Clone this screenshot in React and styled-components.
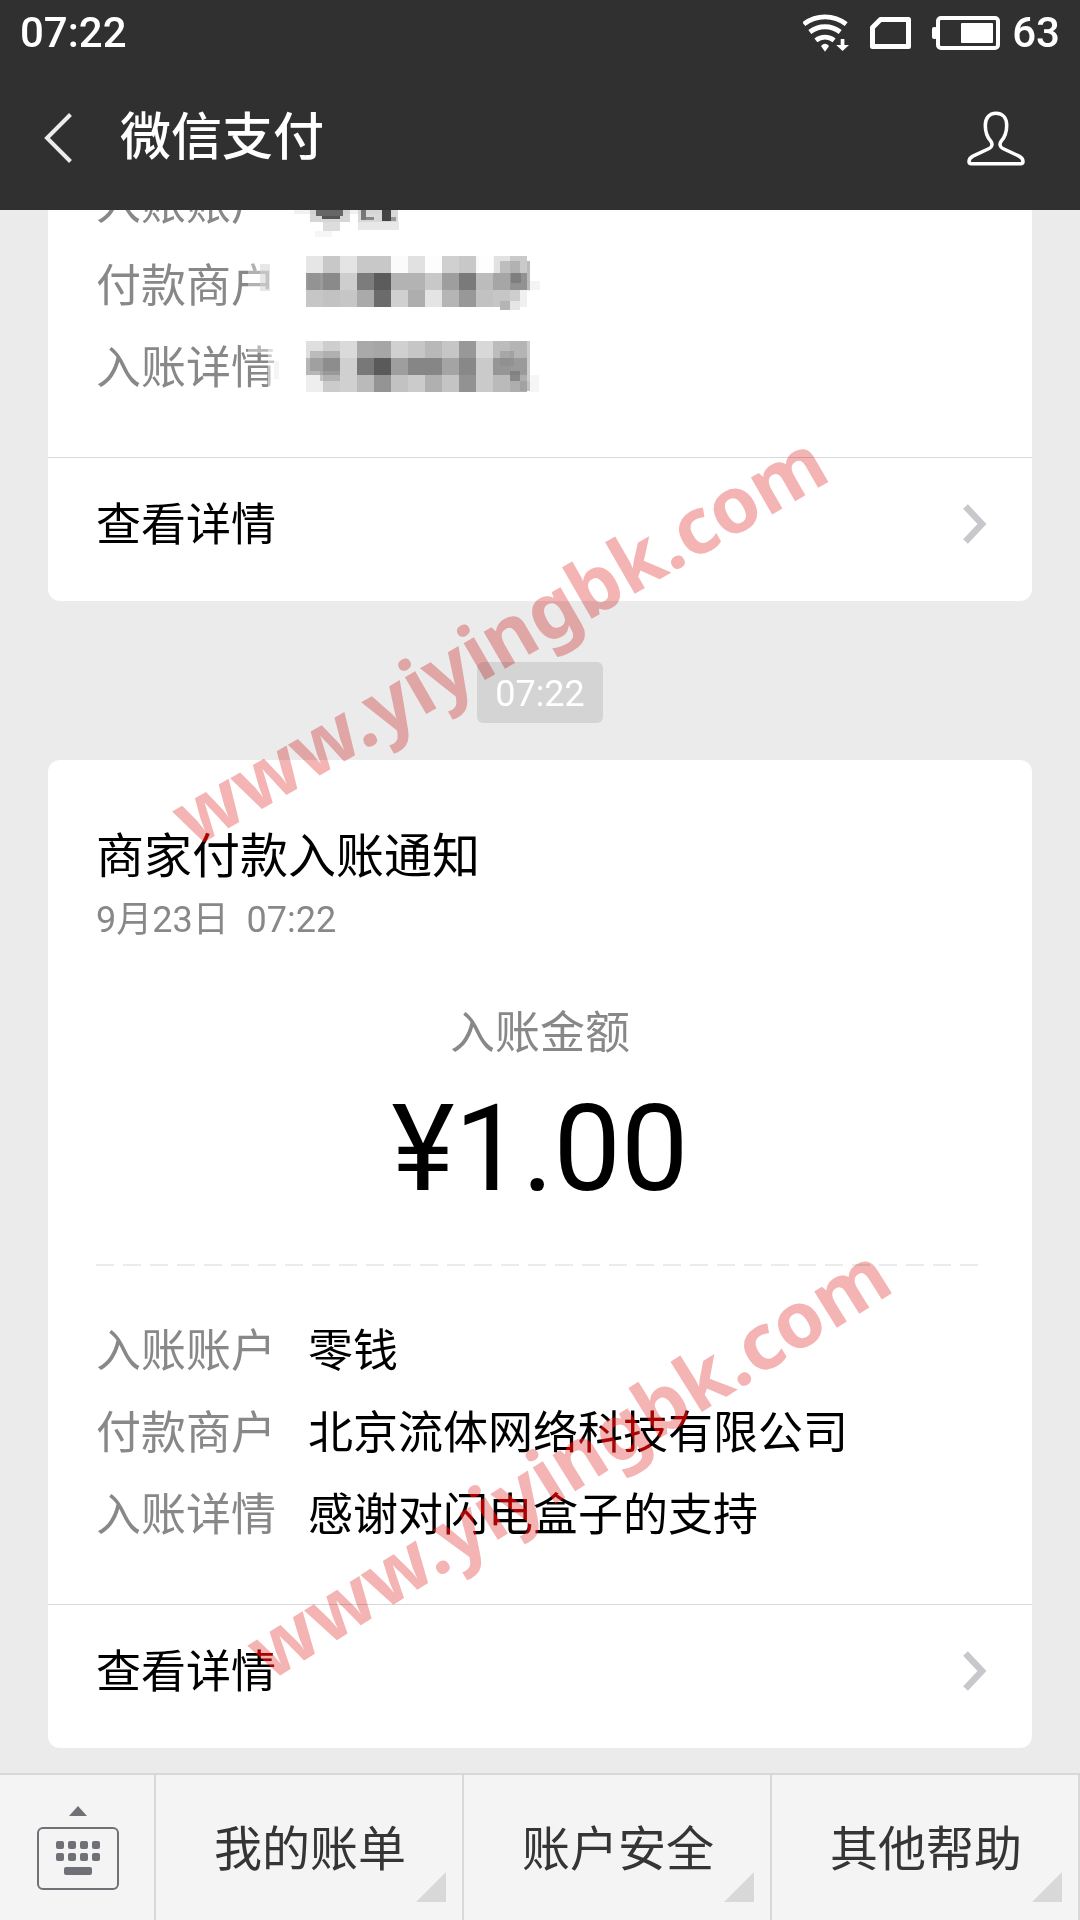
import React from "react";
import styled, { createGlobalStyle } from "styled-components";

const GlobalStyle = createGlobalStyle`
  *, *::before, *::after { box-sizing: border-box; }
  html, body { margin: 0; padding: 0; }
  body {
    background: #ebebeb;
    font-family: Roboto, "Noto Sans CJK SC", sans-serif;
    color: #000;
  }
  h1, h2, p, dl, dt, dd { margin: 0; font-weight: 400; }
  button { font: inherit; color: inherit; border: 0; padding: 0; background: none; cursor: pointer; }
  svg { display: block; flex: none; }
`;

const Screen = styled.div`
  position: relative;
  display: flex;
  flex-direction: column;
  height: 100vh;
  overflow: hidden;
`;

const Header = styled.header`
  flex: none;
  background: #303030;
  color: #fff;
`;

const StatusBar = styled.div`
  display: flex;
  align-items: center;
  justify-content: space-between;
  height: 68px;
  padding: 0 20px 2px;
  font-size: 42px;
  font-weight: 500;
  line-height: 48px;
`;

const StatusIcons = styled.div`
  display: flex;
  align-items: center;
  gap: ${(p) => p.$gap}px;
`;

const NavBar = styled.div`
  display: flex;
  align-items: center;
  height: 142px;
  padding: 0 55px 2px 44px;
  gap: 48px;
`;

const Title = styled.h1`
  flex: 1;
  font-size: 51px;
  font-weight: 500;
  line-height: 72px;
`;

const Chat = styled.main`
  flex: 1;
  min-height: 0;
  overflow: hidden;
  display: flex;
  flex-direction: column;
  justify-content: flex-end;
  padding: 0 48px 25px;
`;

const Card = styled.article`
  flex: none;
  background: #fff;
  border-radius: 12px;
`;

const CardBody = styled.div`
  padding: ${(p) => (p.$partial ? 0 : 67)}px 48px 47px;
`;

const CardTitle = styled.h2`
  font-size: 48px;
  line-height: 60px;
`;

const CardDate = styled.p`
  margin-top: 11px;
  font-size: 36px;
  line-height: 44px;
  color: #888;
  white-space: pre;
`;

const AmountBlock = styled.div`
  margin-top: 62px;
  text-align: center;
`;

const AmountLabel = styled.p`
  font-size: 45px;
  line-height: 60px;
  color: #888;
`;

const Amount = styled.p`
  margin-top: 15px;
  font-size: 120px;
  line-height: 140px;
`;

const Dashes = styled.div`
  height: 2px;
  margin: 45px 0;
  background: repeating-linear-gradient(to right, #ebebeb 0 18px, transparent 18px 27px);
`;

const Details = styled.dl`
  display: grid;
  grid-template-columns: 180px 1fr;
  column-gap: 32px;
  grid-auto-rows: 82px;
  align-items: center;
  font-size: 45px;
  line-height: 82px;
`;

const Label = styled.dt`
  color: #888;
  white-space: nowrap;
`;

const Value = styled.dd`
  white-space: nowrap;
`;

const DetailLink = styled.a`
  display: flex;
  align-items: center;
  justify-content: space-between;
  height: 144px;
  padding: 0 45px 8px 48px;
  border-top: 1px solid #d9d9d9;
  font-size: 45px;
  line-height: 60px;
  color: #000;
  text-decoration: none;

  svg { margin-bottom: 4px; }
`;

const TimePill = styled.time`
  flex: none;
  align-self: center;
  margin: 61px 0 37px;
  padding: 4px 18px 0;
  border-radius: 6px;
  background: #d4d4d4;
  color: #fff;
  font-size: 36px;
  line-height: 57px;
`;

const MenuBar = styled.nav`
  flex: none;
  display: flex;
  height: 147px;
  border-top: 2px solid #d8d8d8;
  background: #f4f4f4;
  color: #353535;
`;

const KeyboardButton = styled.button`
  flex: none;
  display: flex;
  align-items: center;
  justify-content: center;
  width: 156px;
  padding-left: 2px;
  border-right: 2px solid #d8d8d8;
`;

const MenuButton = styled.button`
  position: relative;
  flex: 1;
  padding: 4px 0 0 2px;
  font-size: 48px;
  line-height: 60px;
  border-right: 2px solid #d8d8d8;

  &::after {
    content: "";
    position: absolute;
    right: 16px;
    bottom: 18px;
    width: 30px;
    height: 30px;
    background: #d8d8d8;
    clip-path: polygon(100% 0, 100% 100%, 0 100%);
  }
`;

/* Two passes: multiply tints light areas, lighten turns dark strokes red. */
const Stamp = styled.div`
  &::after { content: attr(data-text); color: #b00000; mix-blend-mode: lighten; }
  & > span { color: #f4b4b4; mix-blend-mode: multiply; }
  &::after, & > span {
    position: absolute;
    left: ${(p) => p.$x}px;
    top: ${(p) => p.$y}px;
    transform: translate(-50%, -50%) rotate(${(p) => p.$angle}deg);
    font-family: "Noto Sans", sans-serif;
    font-size: 78px;
    font-weight: 700;
    line-height: 100px;
    white-space: nowrap;
    pointer-events: none;
  }
`;

function Watermark({ text, x, y, angle }) {
  return (
    <Stamp data-text={text} $x={x} $y={y} $angle={angle}>
      <span>{text}</span>
    </Stamp>
  );
}

const WifiIcon = () => (
  <svg width="46" height="40" viewBox="802 13 46 40" fill="none" stroke="#fff" strokeWidth="4.8">
    <path d="M802.8 24.2A34.5 34.5 0 0 1 845.2 24.2" />
    <path d="M808.8 32A24.7 24.7 0 0 1 839.2 32" />
    <path d="M814.9 40.3A14.6 14.6 0 0 1 833.1 40.3" />
    <path d="M820 46Q824 41.5 828 46L824 51.8Z" fill="#fff" stroke="none" />
    <path d="M839.7 39H843.4V45H848L841.6 51L835.2 45H839.7Z" fill="#fff" stroke="none" />
  </svg>
);

const SimIcon = () => (
  <svg width="41" height="32" viewBox="0 0 41 32" fill="none" stroke="#fff" strokeWidth="5" strokeLinejoin="round">
    <path d="M10.5 2.5H38.5V29.5H2.5V10.5Z" />
  </svg>
);

const BatteryIcon = () => (
  <svg width="68" height="34" viewBox="0 0 68 34">
    <rect x="6" y="2" width="60" height="30" rx="3" fill="none" stroke="#fff" strokeWidth="4" />
    <rect x="0" y="11" width="5" height="12" rx="2" fill="#fff" />
    <rect x="29" y="7" width="32" height="20" rx="1" fill="#fff" />
  </svg>
);

const BackIcon = () => (
  <svg width="28" height="50" viewBox="0 0 28 50" fill="none" stroke="#ececec" strokeWidth="4">
    <path d="M26.5 1.5L3 25L26.5 48.5" />
  </svg>
);

const PersonIcon = () => (
  <svg width="58" height="55" viewBox="0 0 59 56" fill="none" stroke="#fff" strokeWidth="3.6" strokeLinejoin="round">
    <path d="M29.5 2.3C22 2.3 18.6 8 18.6 14.5C18.6 22 20.5 26.5 24 30.5C26.4 33.5 25.6 36.6 22.5 38.2L6 46C3 47.6 2 49 2 51.5Q2 53.8 4.5 53.8H54.5Q57 53.8 57 51.5C57 49 56 47.6 53 46L36.5 38.2C33.4 36.6 32.6 33.5 35 30.5C38.5 26.5 40.4 22 40.4 14.5C40.4 8 37 2.3 29.5 2.3Z" />
  </svg>
);

const ArrowIcon = () => (
  <svg width="24" height="40" viewBox="0 0 24 40" fill="none" stroke="#c7c7cc" strokeWidth="6.5">
    <path d="M2.5 2.5L19 20L2.5 37.5" />
  </svg>
);

const KeyboardIcon = () => (
  <svg width="82" height="84" viewBox="0 0 82 84" fill="#6f7176">
    <path d="M41 0L50 10H32Z" />
    <rect x="1" y="22" width="80" height="61" rx="5" fill="none" stroke="#6f7176" strokeWidth="2" />
    {[35, 47].map((y) =>
      [19, 31, 43, 55].map((x) => <rect key={`${x}-${y}`} x={x} y={y} width="8" height="8" rx="2" />)
    )}
    <rect x="27" y="61" width="28" height="8" rx="2" />
  </svg>
);

const CELL = 17;

/* Pixelated value: rows of grey levels, plus loose patches [x, y, w, h, colour, opacity]. */
function Mosaic({ top, rows, patches }) {
  return (
    <svg width="230" height="82" viewBox="0 2 230 82" overflow="visible" role="img" aria-label="已打码" shapeRendering="crispEdges">
      {rows.map((row, r) =>
        row.split(" ").map((level, c) => (
          <rect key={`${r}-${c}`} x={c * CELL - 2} y={top + r * CELL} width={CELL} height={CELL} fill={`#${level}${level}${level}`} />
        ))
      )}
      {patches.map(([x, y, w, h, fill, opacity], i) => (
        <rect key={i} x={x} y={y} width={w} height={h} fill={fill} opacity={opacity} />
      ))}
    </svg>
  );
}

const masked = [
  {
    label: "入账账户",
    top: 0,
    rows: [],
    patches: [
      [-14, 48, 100, 4, "#e4e4e4", 0.5],
      [2, 48, 40, 12, "#c4c4c4", 0.7],
      [8, 48, 27, 6, "#666", 1],
      [14, 54, 18, 3, "#555", 1],
      [15, 60, 17, 9, "#ddd", 1],
      [50, 48, 40, 12, "#cfcfcf", 0.8],
      [53, 48, 5, 10, "#777", 1],
      [58, 55, 8, 3, "#888", 1],
      [74, 48, 9, 11, "#444", 1],
      [83, 55, 5, 4, "#999", 1],
      [50, 60, 41, 8, "#e8e8e8", 1],
      [7, 69, 17, 6, "#f6f6f6", 1],
    ],
  },
  {
    label: "付款商户",
    top: 12,
    rows: [
      "e6 c8 e4 c8 c8 fb e1 fd d0 c8 fa e2 ca",
      "9a 8a ce 7c 5c b3 b3 c8 9e 7a bc a6 92",
      "c6 c2 c6 aa 6b d0 ae e4 b5 98 c2 c6 ce",
    ],
    patches: [
      [-60, 17, 12, 30, "#fff", 0.35],
      [-48, 20, 10, 27, "#ddd", 0.7],
      [-62, 47, 24, 6, "#fff", 0.5],
      [0, 29, 12, 17, "#888", 0.35],
      [171, 12, 15, 17, "#fff", 0.8],
      [192, 17, 20, 12, "#999", 0.5],
      [203, 29, 10, 10, "#777", 0.7],
      [219, 17, 3, 30, "#bbb", 1],
      [192, 57, 10, 9, "#b5b5b5", 1],
      [202, 57, 10, 9, "#e6e6e6", 1],
      [212, 46, 10, 17, "#fff", 0.7],
      [222, 37, 10, 9, "#f4f4f4", 1],
    ],
  },
  {
    label: "入账详情",
    top: 15,
    rows: [
      "df ce da a9 a6 d0 c6 b8 c6 98 d8 bc b4",
      "b6 98 d0 78 5a 9e 86 86 a4 88 ca 96 9a",
      "ee cb d0 ba 94 c2 cb b0 c4 92 ca ba ae",
    ],
    patches: [
      [-40, 15, 8, 47, "#fff", 0.5],
      [-60, 15, 25, 12, "#fff", 0.4],
      [-34, 35, 5, 18, "#f2f2f2", 0.8],
      [2, 25, 30, 20, "#777", 0.35],
      [12, 45, 20, 10, "#999", 0.5],
      [192, 25, 14, 15, "#888", 0.4],
      [202, 45, 10, 10, "#777", 0.7],
      [212, 55, 10, 10, "#999", 0.6],
      [219, 15, 3, 40, "#ccc", 1],
      [222, 49, 9, 17, "#f6f6f6", 1],
    ],
  },
];

const details = [
  ["入账账户", "零钱"],
  ["付款商户", "北京流体网络科技有限公司"],
  ["入账详情", "感谢对闪电盒子的支持"],
];

const menus = ["我的账单", "账户安全", "其他帮助"];

function MoreLink() {
  return (
    <DetailLink href="#detail">
      查看详情
      <ArrowIcon />
    </DetailLink>
  );
}

export default function App() {
  return (
    <Screen lang="zh-CN">
      <GlobalStyle />
      <Header>
        <StatusBar>
          <time>07:22</time>
          <StatusIcons $gap={12}>
            <StatusIcons $gap={21}>
              <WifiIcon />
              <SimIcon />
              <BatteryIcon />
            </StatusIcons>
            <span>63</span>
          </StatusIcons>
        </StatusBar>
        <NavBar>
          <button aria-label="返回"><BackIcon /></button>
          <Title>微信支付</Title>
          <button aria-label="账户信息"><PersonIcon /></button>
        </NavBar>
      </Header>

      <Chat>
        <Card>
          <CardBody $partial>
            <Details>
              {masked.map(({ label, ...mosaic }) => (
                <React.Fragment key={label}>
                  <Label>{label}</Label>
                  <Value><Mosaic {...mosaic} /></Value>
                </React.Fragment>
              ))}
            </Details>
          </CardBody>
          <MoreLink />
        </Card>

        <TimePill>07:22</TimePill>

        <Card>
          <CardBody>
            <CardTitle>商家付款入账通知</CardTitle>
            <CardDate>{"9月23日  07:22"}</CardDate>
            <AmountBlock>
              <AmountLabel>入账金额</AmountLabel>
              <Amount>¥1.00</Amount>
            </AmountBlock>
            <Dashes />
            <Details>
              {details.map(([label, value]) => (
                <React.Fragment key={label}>
                  <Label>{label}</Label>
                  <Value>{value}</Value>
                </React.Fragment>
              ))}
            </Details>
          </CardBody>
          <MoreLink />
        </Card>
      </Chat>

      <MenuBar>
        <KeyboardButton aria-label="切换键盘"><KeyboardIcon /></KeyboardButton>
        {menus.map((name) => <MenuButton key={name}>{name}</MenuButton>)}
      </MenuBar>

      <Watermark text="www.yiyingbk.com" x={498} y={638} angle={-30} />
      <Watermark text="www.yiyingbk.com" x={567} y={1461} angle={-32} />
    </Screen>
  );
}
